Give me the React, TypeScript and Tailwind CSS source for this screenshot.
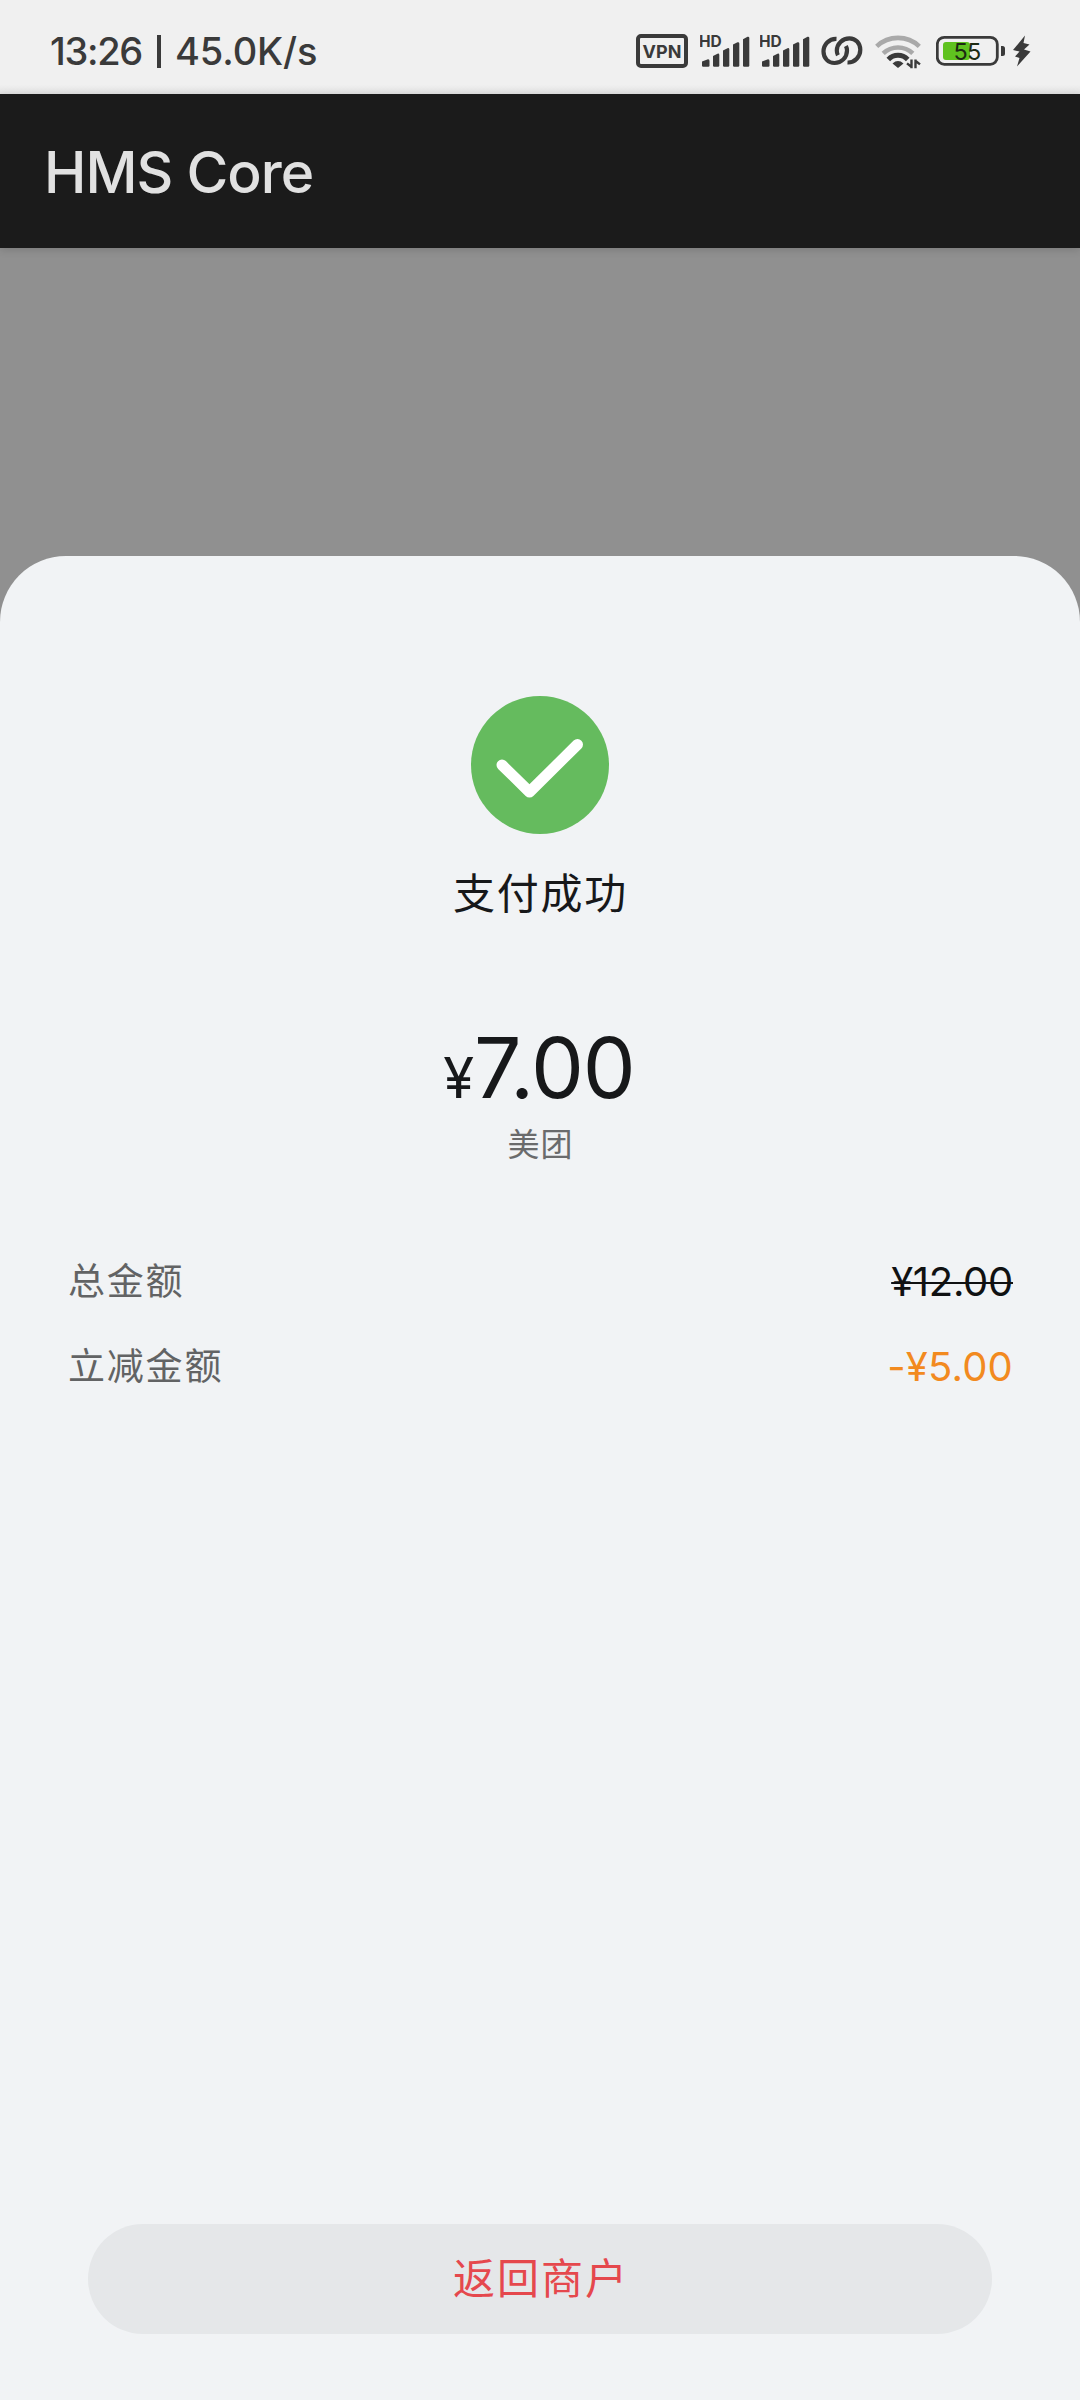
import type { ReactNode } from "react"

function SignalIcon() {
  return (
    <svg width="50" height="40" viewBox="0 0 50 40" fill="#3a3a3a">
      <text x="-1" y="16.7" fontSize="15.5" fontWeight="700" fontFamily="Inter, sans-serif">
        HD
      </text>
      <path d="M2 31.5 L8 29.2 Q9.5 29 9.5 31 V35.5 Q9.5 36.7 8.3 36.7 H3.2 Q2 36.7 2 35.5Z" />
      <path d="M13 26 L17.5 23.7 Q19.3 23.3 19.3 25 V35.5 Q19.3 36.7 18.1 36.7 H14.2 Q13 36.7 13 35.5Z" />
      <path d="M23 20.5 L27.5 18.2 Q29.3 17.8 29.3 19.5 V35.5 Q29.3 36.7 28.1 36.7 H24.2 Q23 36.7 23 35.5Z" />
      <path d="M33 14.5 L37.5 12.3 Q39.3 11.9 39.3 13.5 V35.5 Q39.3 36.7 38.1 36.7 H34.2 Q33 36.7 33 35.5Z" />
      <path d="M43 9.2 L47.5 6.8 Q49.3 6.4 49.3 8 V35.5 Q49.3 36.7 48.1 36.7 H44.2 Q43 36.7 43 35.5Z" />
    </svg>
  )
}

function LinkIcon() {
  return (
    <svg width="42" height="40" viewBox="0 0 42 40" fill="none" stroke="#3a3a3a" strokeWidth="4.2">
      <path d="M15.5 8.8 C8 8.5 2.5 14.5 2.5 21.5 C2.5 28.5 7.5 33 13.5 33 C20.5 33 26 27.5 26 20.5 C26 18.7 25.6 17.3 24.9 16" />
      <path d="M26.5 32.5 C34 32.8 39.3 26.5 39.3 19.8 C39.3 13 34.5 8.3 28.5 8.3 C21.5 8.3 15.8 13.8 15.8 20.6 C15.8 22.4 16.2 23.9 16.9 25.2" />
    </svg>
  )
}

function WifiIcon() {
  return (
    <svg width="46" height="40" viewBox="0 0 46 40" fill="none" strokeWidth="4.6">
      <path d="M1.7 16.4 A31 31 0 0 1 44.3 16.4" stroke="#a9a9a9" />
      <path d="M8.2 23.4 A21.5 21.5 0 0 1 37.8 23.4" stroke="#a9a9a9" />
      <path d="M13.3 29.4 A13.5 13.5 0 0 1 32.7 29.4" stroke="#3a3a3a" strokeWidth="5" />
      <path d="M17.5 33.4 Q23 28.7 28.5 33.4 L23 38Z" fill="#3a3a3a" />
      <path d="M36.5 29.5 V38.3 M37 37.3 L32 33.4 M40.5 38.3 V29.5 M40 30.5 L45 34.4" stroke="#3a3a3a" strokeWidth="2.4" />
    </svg>
  )
}

function BatteryIcon() {
  return (
    <svg width="70" height="40" viewBox="0 0 70 40">
      <rect x="1.3" y="7.3" width="60" height="27" rx="7" fill="none" stroke="#3a3a3a" strokeWidth="2.8" />
      <rect x="7" y="12" width="27" height="18" rx="3" fill="#5fc21f" />
      <path d="M65 16 H66.5 Q69 16 69 18.5 V23.5 Q69 26 66.5 26 H65Z" fill="#3a3a3a" />
      <text x="31" y="30" textAnchor="middle" fontSize="23.5" fontFamily="Inter, sans-serif" fill="#1c2a12" letterSpacing="-0.8">
        55
      </text>
    </svg>
  )
}

function StatusBar() {
  return (
    <div className="flex h-[94px] items-start bg-gradient-to-b from-[#f0f0f0] from-90% to-[#e2e2e2] pl-[50px] pt-[30px] text-[#3a3a3a]">
      <div className="flex h-[42px] w-[270px] items-center text-[38px] font-medium">
        <span className="w-[107px] tracking-[-1.3px]">13:26</span>
        <span className="h-[33px] w-[4px] bg-[#3a3a3a]" />
        <span className="ml-[14px] tracking-[-0.1px]">45.0K/s</span>
      </div>
      <div className="ml-[316px] flex">
        <div className="mt-[4px] flex h-[34px] w-[52px] items-center justify-center rounded-[5px] border-4 border-[#3a3a3a] text-[18px] font-bold">
          VPN
        </div>
        <div className="ml-[12px]"><SignalIcon /></div>
        <div className="ml-[10px]"><SignalIcon /></div>
        <div className="ml-[11px]"><LinkIcon /></div>
        <div className="ml-[12px]"><WifiIcon /></div>
        <div className="ml-[15px]"><BatteryIcon /></div>
        <svg className="ml-[6px]" width="20" height="40" viewBox="0 0 20 40" fill="#3a3a3a">
          <path d="M13 5.5 L1 20 L7.5 21.5 L3 26.5 L7.5 28 L5 36.5 L18.5 21.5 L12 19.5 L17.5 14.5 L11.5 13Z" />
        </svg>
      </div>
    </div>
  )
}

function AmountRow({ label, children }: { label: string; children: ReactNode }) {
  return (
    <div className="flex h-[85px] items-center justify-between">
      <span className="pl-[1px] text-[37px] tracking-[1.8px] text-[#626364]">{label}</span>
      {children}
    </div>
  )
}

export default function App() {
  return (
    <div className="flex h-[2400px] w-[1080px] flex-col overflow-hidden bg-[#909090] font-[Inter,'Noto_Sans_CJK_SC',sans-serif]">
      <StatusBar />
      <header className="flex h-[154px] items-center bg-[#1b1b1b] pl-[44px] pt-[3px] text-[57px] font-medium tracking-[-1px] text-[#e1e1e1] shadow-[0_2px_8px_rgba(0,0,0,0.15)]">
        HMS Core
      </header>

      <main className="mt-[308px] flex flex-1 flex-col rounded-t-[66px] bg-[#f1f3f5] px-[67px] pb-[66px] pt-[140px]">
        <div className="flex flex-col items-center">
          <svg width="138" height="138" viewBox="0 0 138 138">
            <circle cx="69" cy="69" r="69" fill="#65bb5e" />
            <path d="M31 69 L58.5 96 L106.5 48.5" fill="none" stroke="#fff" strokeWidth="11" strokeLinecap="round" strokeLinejoin="round" />
          </svg>
          <h1 className="mt-[30px] h-[60px] pl-[1px] text-[42px] leading-[60px] tracking-[1.8px] text-[#17181a]">支付成功</h1>
          <div className="mt-[94px] flex h-[100px] items-baseline pr-[2px] leading-[100px] text-[#17181a]">
            <span className="text-[56px]">¥</span>
            <span className="text-[84px] tracking-[-1.1px]">7.00</span>
          </div>
          <p className="mt-[7px] h-[40px] pl-[1px] text-[32px] leading-[40px] tracking-[1px] text-[#6a6b6c]">美团</p>
        </div>

        <div className="mt-[74px]">
          <AmountRow label="总金额">
            <span className="text-[40px] tracking-[-0.3px] text-[#101112] line-through decoration-2">¥12.00</span>
          </AmountRow>
          <AmountRow label="立减金额">
            <span className="text-[40px] tracking-[0.2px] text-[#f28a1f]">-¥5.00</span>
          </AmountRow>
        </div>

        <button className="mx-[21px] mt-auto flex h-[110px] items-center justify-center rounded-full bg-[#e5e7e9] pb-[2px] pl-[2px] text-[42px] tracking-[2px] text-[#e5484d]">
          返回商户
        </button>
      </main>
    </div>
  )
}
